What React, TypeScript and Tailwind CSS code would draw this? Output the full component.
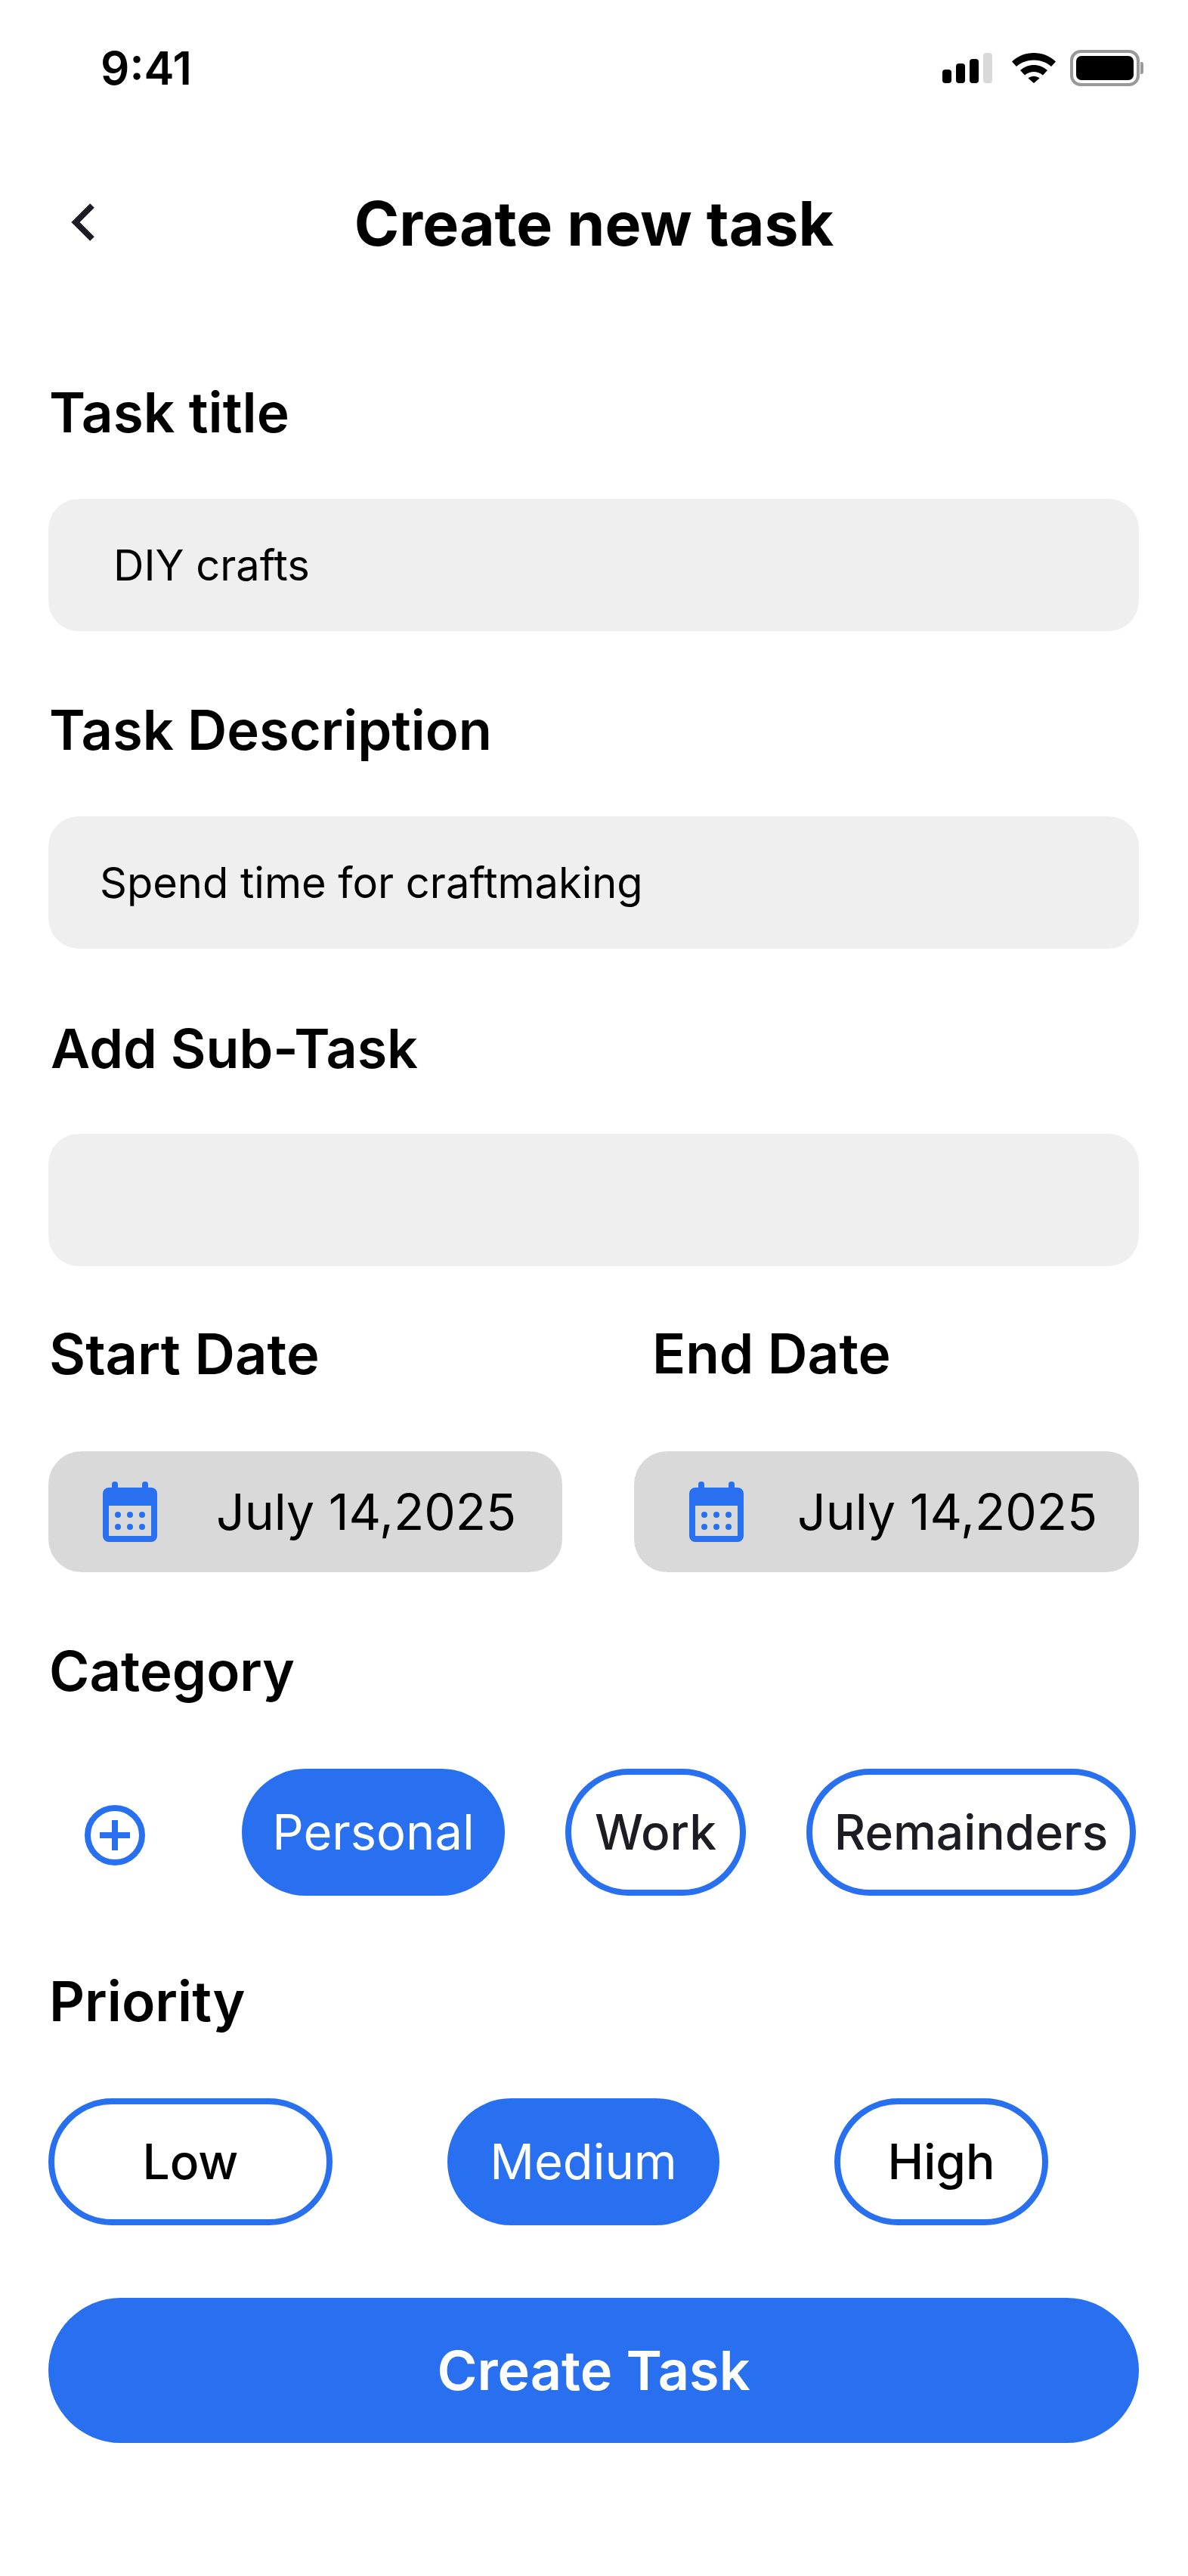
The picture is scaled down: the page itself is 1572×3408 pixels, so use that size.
import React from 'react';

const CalendarIcon: React.FC = () => (
  <svg width="72" height="80" viewBox="0 0 72 80" className="shrink-0">
    <rect x="12" y="0" width="8" height="16" rx="4" fill="#2970f0" />
    <rect x="52" y="0" width="8" height="16" rx="4" fill="#2970f0" />
    <path
      fillRule="evenodd"
      fill="#2970f0"
      d="M8 8h56a8 8 0 0 1 8 8v56a8 8 0 0 1-8 8H8a8 8 0 0 1-8-8V16a8 8 0 0 1 8-8ZM8 32v40h56V32H8Z"
    />
    {[20, 36, 52].map((x) => (
      <React.Fragment key={x}>
        <circle cx={x} cy="44" r="4" fill="#2970f0" />
        <circle cx={x} cy="60" r="4" fill="#2970f0" />
      </React.Fragment>
    ))}
  </svg>
);

const StatusIcons: React.FC = () => (
  <div className="flex items-center">
    <svg width="66" height="40" viewBox="0 0 66 40">
      <rect x="0" y="22" width="12" height="18" rx="4" fill="#000" />
      <rect x="18" y="14" width="12" height="26" rx="4" fill="#000" />
      <rect x="36" y="8" width="12" height="32" rx="4" fill="#000" />
      <rect x="54" y="0" width="12" height="40" rx="4" fill="#d9d9d9" />
    </svg>
    <svg width="58" height="40" viewBox="0 0 58 40" className="ml-[26px]">
      <path d="M0 11.500C16-3.800 42-3.800 58 11.500L52 18C39.500 6.500 18.500 6.500 6 18Z" fill="#000" />
      <path d="M11 23C21.500 13.500 36.500 13.500 47 23L41 29.500C34 23.500 24 23.500 17 29.500Z" fill="#000" />
      <path d="M21.500 33.500C26 29.700 32 29.700 36.500 33.500L29 40Z" fill="#000" />
    </svg>
    <div className="ml-[19px] flex items-center">
      <div className="w-[92px] h-[48px] rounded-[14px] border-[4px] border-[#999999] p-[4px] bg-white">
        <div className="w-full h-full rounded-[7px] bg-black" />
      </div>
      <div className="w-[4px] h-[16px] ml-[1px] rounded-r-[3px] bg-[#999999]" />
    </div>
  </div>
);

const Label: React.FC<{ children: React.ReactNode; className?: string }> = ({ children, className }) => (
  <div className={`leading-[88px] font-semibold text-black ${className ?? ''}`}>{children}</div>
);

const Field: React.FC<{ text?: string; className?: string }> = ({ text, className }) => (
  <div className={`h-[175px] rounded-[40px] bg-[#efefef] flex items-center text-[56px] text-black ${className ?? ''}`}>
    {text}
  </div>
);

const DateBox: React.FC<{ className: string; textLeft: string }> = ({ className, textLeft }) => (
  <div className={`h-[160px] rounded-[44px] bg-[#d9d9d9] flex items-center ${className}`}>
    <CalendarIcon />
    <span className={`text-[66px] text-black ${textLeft}`}>July 14,2025</span>
  </div>
);

const Pill: React.FC<{ label: string; active?: boolean; className: string }> = ({ label, active, className }) => (
  <div
    className={`h-[168px] rounded-[84px] flex items-center justify-center ${
      active ? 'text-[65px] bg-[#2970f0] text-white' : 'text-[64px] font-medium border-[8px] border-[#2970f0]'
    } ${className}`}
  >
    {label}
  </div>
);

export default function App() {
  return (
    <div className="w-[1572px] h-[3408px] bg-white font-['Inter',sans-serif] overflow-hidden">
      {/* status bar */}
      <div className="flex items-center justify-between h-[48px] mt-[66px] pl-[133px] pr-[59px]">
        <span className="text-[60px] leading-[48px] font-semibold text-black">9:41</span>
        <StatusIcons />
      </div>

      {/* header */}
      <div className="relative mt-[132px] h-[100px] flex items-center justify-center">
        <svg width="36" height="52" viewBox="0 0 36 52" className="absolute left-[92px] top-[22px]">
          <path d="M30 4 8 26l22 22" fill="none" stroke="#1c1c22" strokeWidth="8" />
        </svg>
        <h1 className="text-[80.5px] leading-[100px] font-bold text-black">Create new task</h1>
      </div>

      <div className="pl-[64px] pr-[65px] mt-[156px]">
        <Label className="ml-[1px] text-[73px]">Task title</Label>
        <Field text="DIY crafts" className="mt-[70px] pl-[86px]" />
        <Label className="mt-[87px] ml-[1px] text-[72.300px]">Task Description</Label>
        <Field text="Spend time for craftmaking" className="mt-[70px] pl-[68px]" />
        <Label className="mt-[88px] ml-[3px] text-[71.800px]">Add Sub-Task</Label>
        <Field className="mt-[69px]" />

        <div className="flex mt-[72px]">
          <Label className="ml-[1px] w-[798px] text-[74px]">Start Date</Label>
          <Label className="text-[73px]">End Date</Label>
        </div>
        <div className="flex mt-[85px] gap-[95px]">
          <DateBox className="w-[680px] pl-[72px]" textLeft="ml-[78px]" />
          <DateBox className="w-[668px] pl-[73px]" textLeft="ml-[71px]" />
        </div>

        <Label className="mt-[87px] ml-[1px] text-[72.500px]">Category</Label>
        <div className="flex items-center mt-[85px]">
          <svg width="80" height="80" viewBox="0 0 80 80" className="ml-[48px] mt-[8px] shrink-0">
            <circle cx="40" cy="40" r="36" fill="none" stroke="#2970f0" strokeWidth="8" />
            <path d="M40 20v40M20 40h40" fill="none" stroke="#2970f0" strokeWidth="8" />
          </svg>
          <Pill label="Personal" active className="w-[348px] ml-[128px]" />
          <Pill label="Work" className="w-[239px] ml-[80px] text-[#1c1c22]" />
          <Pill label="Remainders" className="w-[436px] ml-[80px] text-[#1c1c22]" />
        </div>

        <Label className="mt-[96px] ml-[1px] text-[73px]">Priority</Label>
        <div className="flex items-center mt-[84px]">
          <Pill label="Low" className="w-[376px] text-black" />
          <Pill label="Medium" active className="w-[360px] ml-[152px]" />
          <Pill label="High" className="w-[283px] ml-[152px] text-black" />
        </div>

        <div className="mt-[96px] h-[192px] rounded-[96px] bg-[#2970f0] flex items-center justify-center text-[72px] font-semibold text-white">
          Create Task
        </div>
      </div>
    </div>
  );
}
